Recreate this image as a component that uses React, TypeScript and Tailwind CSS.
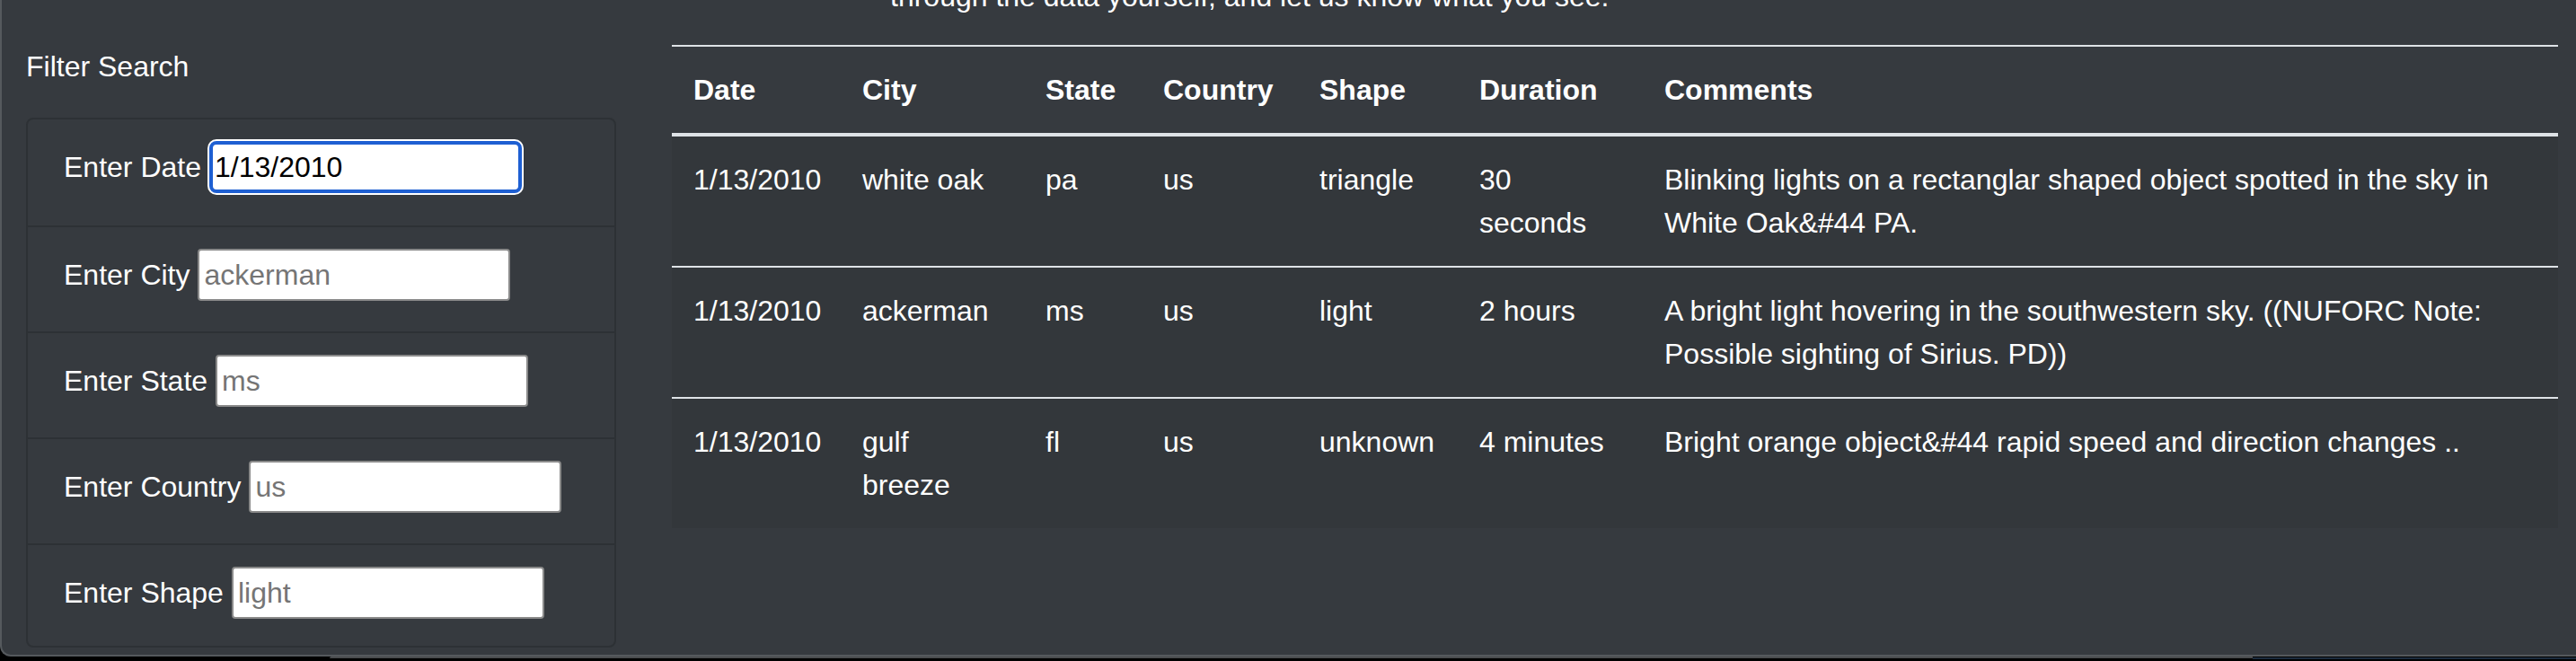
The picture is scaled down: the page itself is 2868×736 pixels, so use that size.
import React from "react";

const rows = [
  {
    date: "1/13/2010",
    city: "white oak",
    state: "pa",
    country: "us",
    shape: "triangle",
    duration: "30 seconds",
    comments: "Blinking lights on a rectanglar shaped object spotted in the sky in White Oak&#44 PA.",
  },
  {
    date: "1/13/2010",
    city: "ackerman",
    state: "ms",
    country: "us",
    shape: "light",
    duration: "2 hours",
    comments: "A bright light hovering in the southwestern sky. ((NUFORC Note: Possible sighting of Sirius. PD))",
  },
  {
    date: "1/13/2010",
    city: "gulf breeze",
    state: "fl",
    country: "us",
    shape: "unknown",
    duration: "4 minutes",
    comments: "Bright orange object&#44 rapid speed and direction changes ..",
  },
];

const filters = [
  { label: "Enter Date", value: "1/13/2010", focused: true },
  { label: "Enter City", placeholder: "ackerman" },
  { label: "Enter State", placeholder: "ms" },
  { label: "Enter Country", placeholder: "us" },
  { label: "Enter Shape", placeholder: "light" },
];

const headers = ["Date", "City", "State", "Country", "Shape", "Duration", "Comments"];
const widths = [188, 204, 131, 174, 178, 206, 1019];

export default function App() {
  return (
    <div className="w-[2868px] h-[736px] overflow-hidden bg-black font-['Liberation_Sans',Arial,sans-serif] text-white text-[32px] leading-[48px]">
      <div className="h-[731px] overflow-hidden bg-[#363a3f] border-l-2 border-b-2 border-[#55595d] rounded-bl-[12px] flex">
        <aside className="w-[714px] shrink-0 pl-[27px] pt-[50px]">
          <div className="mb-[33px]">Filter Search</div>
          <ul className="w-[657px] border-2 border-[#2d3135] rounded-[8px]">
            {filters.map((f, i) => (
              <li
                key={f.label}
                className={
                  (i > 0 ? "border-t-2 border-[#2d3135] " : "") +
                  (i === filters.length - 1 ? "h-[114px] " : "h-[118px] ") +
                  "px-[40px] pt-[24px]"
                }
              >
                <div className="flex items-center h-[58px] gap-[9px]">
                  <label className="whitespace-nowrap">{f.label}</label>
                  {f.focused ? (
                    <input
                      defaultValue={f.value}
                      className="w-[348px] h-[58px] bg-white text-black border-4 border-[#1e5fd2] rounded-[8px] shadow-[0_0_0_2px_#ffffff] px-[2px] text-[32px] outline-none font-['Liberation_Sans',Arial,sans-serif]"
                    />
                  ) : (
                    <input
                      placeholder={f.placeholder}
                      className="w-[348px] h-[58px] bg-white text-black border-2 border-[#8a8a8a] rounded-[4px] px-[5px] text-[32px] outline-none placeholder:text-[#757575] font-['Liberation_Sans',Arial,sans-serif]"
                    />
                  )}
                </div>
              </li>
            ))}
          </ul>
        </aside>
        <main className="flex-1 min-w-0">
          <p className="mt-[-28px] ml-[275px] whitespace-nowrap">
            through the data yourself, and let us know what you see.
          </p>
          <table className="mt-[30px] ml-[32px] w-[2100px] table-fixed border-collapse">
            <colgroup>
              {widths.map((w, i) => (
                <col key={i} style={{ width: w }} />
              ))}
            </colgroup>
            <thead>
              <tr className="border-t-2 border-b-4 border-[#dee2e6]">
                {headers.map((h) => (
                  <th key={h} className="text-left font-bold p-[24px] align-bottom whitespace-nowrap">
                    {h}
                  </th>
                ))}
              </tr>
            </thead>
            <tbody className="bg-[#33373b]">
              {rows.map((r, i) => (
                <tr key={i} className={i > 0 ? "border-t-2 border-[#dee2e6]" : ""}>
                  <td className="p-[24px] align-top whitespace-nowrap">{r.date}</td>
                  <td className="p-[24px] align-top">{r.city}</td>
                  <td className="p-[24px] align-top">{r.state}</td>
                  <td className="p-[24px] align-top">{r.country}</td>
                  <td className="p-[24px] align-top">{r.shape}</td>
                  <td className="p-[24px] align-top">{r.duration}</td>
                  <td className="p-[24px] align-top">{r.comments}</td>
                </tr>
              ))}
            </tbody>
          </table>
        </main>
      </div>
      <div className="flex h-[3px]">
        <div className="w-[367px] shrink-0" />
        <div className="w-[2141px] shrink-0 h-[2px] bg-[#4a4c4e] rounded-tl-[4px]" />
        <div className="flex-1 h-[2px] mt-[1px] bg-[#1c2c3e]" />
      </div>
    </div>
  );
}
